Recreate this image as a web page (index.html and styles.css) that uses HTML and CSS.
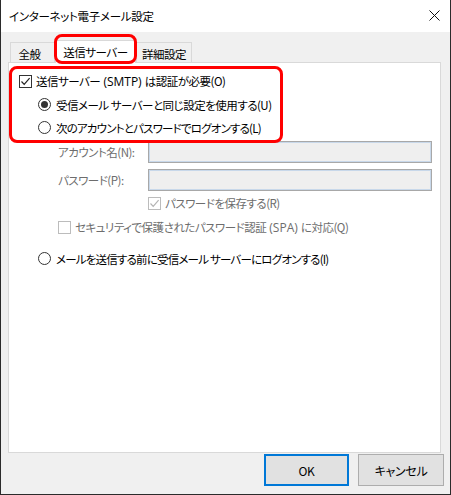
FILE: index.html
```html
<!DOCTYPE html>
<html lang="ja">
  <head>
    <meta charset="UTF-8" />
    <meta name="viewport" content="width=device-width, initial-scale=1.0" />
    <title>インターネット電子メール設定</title>
    <link rel="stylesheet" href="styles.css">
  </head>
  <body>
    <div class="window">
      <div class="titlebar">
        <span class="title">インターネット電子メール設定</span>
        <span class="close">
          <svg width="11" height="11" viewBox="0 0 11 11">
            <path d="M0.5 0.5 L10.5 10.5 M10.5 0.5 L0.5 10.5" stroke="#111" stroke-width="1" fill="none" />
          </svg>
        </span>
      </div>

      <div class="dialog">
        <div class="tabs">
          <div class="tab tab-general">全般</div>
          <div class="tab active mark">送信サーバー</div>
          <div class="tab tab-detail">詳細設定</div>
        </div>

        <div class="panel">
          <div class="auth-group mark">
            <div class="row">
              <span class="box checked">
                <svg width="11" height="11" viewBox="0 0 11 11">
                  <path d="M1.5 5.5 L4.2 8.3 L9.6 2.2" stroke="#222" stroke-width="1.2" fill="none" />
                </svg>
              </span>
              <span>送信サーバー<span class="en"> (SMTP) </span>は認証が必要(O)</span>
            </div>
            <div class="row indent">
              <span class="radio selected"></span>
              <span>受信メール サーバーと同じ設定を使用する(U)</span>
            </div>
            <div class="row indent">
              <span class="radio"></span>
              <span class="narrow">次のアカウントとパスワードでログオンする(L)</span>
            </div>
          </div>

          <div class="field first-field">
            <span class="field-label">アカウント名(N):</span>
            <span class="textbox"></span>
          </div>
          <div class="field second-field">
            <span class="field-label">パスワード(P):</span>
            <span class="textbox"></span>
          </div>

          <div class="row tall save-row disabled">
            <span class="box checked">
              <svg width="11" height="11" viewBox="0 0 11 11">
                <path d="M1.5 5.5 L4.2 8.3 L9.6 2.2" stroke="#b4b4b4" stroke-width="1.2" fill="none" />
              </svg>
            </span>
            <span>パスワードを保存する(R)</span>
          </div>
          <div class="row tall spa-row disabled">
            <span class="box"></span>
            <span>セキュリティで保護されたパスワード認証<span class="en"> (SPA) </span>に対応(Q)</span>
          </div>

          <div class="row indent last-row">
            <span class="radio"></span>
            <span class="narrow">メールを送信する前に受信メール サーバーにログオンする(I)</span>
          </div>
        </div>

        <div class="buttons">
          <button class="btn default">OK</button>
          <button class="btn">キャンセル</button>
        </div>
      </div>
    </div>
  </body>
</html>
```

FILE: styles.css
```css
body {
  margin: 0;
  background-color: #fff;
  font-family: "Noto Sans CJK JP", "Noto Sans", sans-serif;
  font-size: 11.5px;
  letter-spacing: -0.5px;
  font-feature-settings: "palt";
  color: #000;
}
.en {
  font-family: "Open Sans", "Noto Sans", sans-serif;
  font-size: 12px;
  letter-spacing: 0;
  white-space: pre;
}
.narrow {
  letter-spacing: -0.8px;
}
.window {
  width: 451px;
  height: 495px;
  box-sizing: border-box;
  border: 1px solid #2b2b2b;
  border-top: none;
  display: flex;
  flex-direction: column;
}
.titlebar {
  height: 31px;
  background-color: #fff;
  display: flex;
  align-items: center;
  justify-content: space-between;
  padding: 0 10px 1px 8px;
}
.title {
  letter-spacing: -0.3px;
}
.close {
  display: flex;
}
.dialog {
  flex: 1;
  background-color: #f0f0f0;
  display: flex;
  flex-direction: column;
}

/* タブ */
.tabs {
  height: 22px;
  margin-top: 8px;
  padding-left: 9px;
  display: flex;
  align-items: flex-end;
  position: relative;
  z-index: 1;
}
.tab {
  height: 20px;
  box-sizing: border-box;
  border: 1px solid #d9d9d9;
  border-bottom: none;
  background-color: #f0f0f0;
  display: flex;
  align-items: center;
  justify-content: center;
  padding-top: 2px;
  white-space: nowrap;
}
.tab-general {
  width: 45px;
  padding-right: 6px;
}
.tab.active {
  width: 81px;
  height: 23px;
  margin-bottom: -1px;
  background-color: #fff;
  padding-top: 0;
}
.tab-detail {
  width: 56px;
}

/* 赤い強調枠 */
.mark {
  position: relative;
}
.mark::after {
  content: "";
  position: absolute;
  border: 3px solid #f00;
  border-radius: 8px;
  pointer-events: none;
}
.tab.mark::after {
  top: -7px;
  left: -2px;
  right: -2px;
  bottom: -1px;
}
.auth-group.mark::after {
  top: -4px;
  left: -10px;
  right: 0;
  bottom: -4px;
}

.panel {
  height: 391px;
  margin-left: 7px;
  width: 433px;
  box-sizing: border-box;
  background-color: #fff;
  border: 1px solid #d9d9d9;
  padding: 7px 0 0 10px;
}
.auth-group {
  width: 264px;
}
.row {
  height: 23px;
  display: flex;
  align-items: center;
  gap: 4px;
  white-space: nowrap;
}
.row.tall {
  height: 24px;
}
.indent {
  padding-left: 19px;
  gap: 5px;
}
.box {
  width: 13px;
  height: 13px;
  box-sizing: border-box;
  border: 1px solid #333;
  background-color: #fff;
  display: flex;
  align-items: center;
  justify-content: center;
  flex-shrink: 0;
}
.radio {
  width: 13px;
  height: 13px;
  box-sizing: border-box;
  border: 1px solid #333;
  border-radius: 50%;
  display: flex;
  align-items: center;
  justify-content: center;
  flex-shrink: 0;
}
.radio.selected::before {
  content: "";
  width: 7px;
  height: 7px;
  border-radius: 50%;
  background-color: #333;
}
.disabled {
  color: #6d6d6d;
}
.disabled .box {
  border-color: #bcbcbc;
}

.field {
  height: 22px;
  display: flex;
  align-items: center;
  padding-left: 39px;
  color: #6d6d6d;
  white-space: nowrap;
}
.first-field {
  margin-top: 2px;
}
.second-field {
  margin-top: 6px;
}
.field-label {
  width: 90px;
}
.textbox {
  width: 284px;
  height: 22px;
  box-sizing: border-box;
  border: 1px solid #a8a8a8;
  box-shadow: inset 0 0 0 1px #c8d8ea;
  background-color: #efefef;
}
.save-row {
  padding-left: 129px;
}
.spa-row {
  padding-left: 39px;
}
.last-row {
  margin-top: 8px;
}

/* ボタン */
.buttons {
  display: flex;
  justify-content: flex-end;
  gap: 9px;
  padding-right: 6px;
  margin-top: 1px;
}
.btn {
  width: 86px;
  height: 32px;
  font-family: inherit;
  font-size: 12px;
  font-feature-settings: "palt";
  letter-spacing: -0.3px;
  background-color: #e1e1e1;
  border: 1px solid #adadad;
  color: #000;
  padding: 0;
}
.btn.default {
  width: 85px;
  border: 2px solid #0078d7;
}
```
